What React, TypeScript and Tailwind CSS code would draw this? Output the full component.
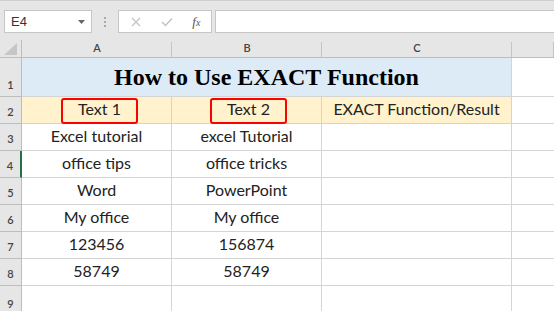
import React from "react";

const rows: [string, string][] = [
  ["Excel tutorial", "excel Tutorial"],
  ["office tips", "office tricks"],
  ["Word", "PowerPoint"],
  ["My office", "My office"],
  ["123456", "156874"],
  ["58749", "58749"],
];

const cell = "border-r border-b border-[#d4d4d4] flex items-end justify-center";
const rh = "bg-[#e6e6e6] border-r border-b border-[#bdbdbd] flex items-end justify-center pb-[3px] text-[11px] text-[#444] font-semibold";

export default function App() {
  return (
    <div className="w-[554px] h-[311px] overflow-hidden bg-white" style={{ fontFamily: "Lato, 'Open Sans', sans-serif" }}>
      {/* toolbar */}
      <div className="h-[40px] bg-[#e6e6e6] border-t border-[#cfcfcf] flex items-start pt-[9px] pl-[4px]">
        <div className="w-[88px] h-[23px] bg-white border border-[#c6c6c6] flex items-center justify-between px-[6px]">
          <span className="text-[13px] text-[#333]" style={{ fontFamily: "'Liberation Sans', sans-serif" }}>E4</span>
          <svg width="7" height="4" viewBox="0 0 7 4"><path d="M0 0 L7 0 L3.5 4 Z" fill="#666" /></svg>
        </div>
        <div className="w-[26px] h-[23px] flex flex-col items-center justify-center gap-[2px]">
          <div className="w-[2px] h-[2px] bg-[#aaa]" />
          <div className="w-[2px] h-[2px] bg-[#aaa]" />
          <div className="w-[2px] h-[2px] bg-[#aaa]" />
        </div>
        <div className="w-[94px] h-[23px] bg-white border border-[#c6c6c6] flex items-center">
          <div className="w-[34px] flex justify-center">
            <svg width="10" height="10" viewBox="0 0 10 10"><path d="M1 1 L9 9 M9 1 L1 9" stroke="#c4c4c4" strokeWidth="1.3" /></svg>
          </div>
          <div className="w-[30px] flex justify-center">
            <svg width="12" height="10" viewBox="0 0 12 10"><path d="M1 5 L4.5 8.5 L11 1.5" stroke="#c4c4c4" strokeWidth="1.5" fill="none" /></svg>
          </div>
          <div className="w-[30px] flex justify-center">
            <span className="text-[13px] italic text-[#555]" style={{ fontFamily: "'Liberation Serif', serif" }}>f<span className="text-[10px]">x</span></span>
          </div>
        </div>
        <div className="ml-[3px] flex-1 h-[23px] bg-white border border-[#c6c6c6] border-r-0" />
      </div>

      <div className="grid grid-cols-[22px_150px_150px_190px_42px] grid-rows-[18px_39px_27px_27px_27px_27px_27px_27px_27px_30px]">
        {/* header row */}
        <div className="bg-[#e6e6e6] border-r border-b border-[#bdbdbd] flex items-end justify-end pr-[4px] pb-[2px]">
          <svg width="13" height="12" viewBox="0 0 13 12"><path d="M13 0 L13 12 L0 12 Z" fill="#c6c6c6" /></svg>
        </div>
        {["A", "B", "C", ""].map((l, i) => (
          <div key={i} className="bg-[#e6e6e6] border-b border-[#bdbdbd] relative flex items-center justify-center text-[11px] font-semibold text-[#444]">
            {l}
            <div className="absolute right-0 top-[2px] bottom-0 w-px bg-[#c4c4c4]" />
          </div>
        ))}

        {/* row 1 */}
        <div className={rh}>1</div>
        <div className="col-span-3 bg-[#ddebf7] border-r border-b border-[#d4d4d4] flex items-end justify-center pb-[1px]">
          <span className="text-[24px] font-bold text-black" style={{ fontFamily: "'Liberation Serif', serif" }}>How to Use EXACT Function</span>
        </div>
        <div className="border-b border-[#d4d4d4]" />

        {/* row 2 */}
        <div className={rh}>2</div>
        <div className={`${cell} bg-[#fff2cc]`}>
          <div className="w-[77px] h-[26px] border-2 border-[#ff0000] rounded-[3px] flex items-end justify-center pb-[1px] text-[16px] text-[#222] translate-y-[1px] translate-x-[3px]">Text 1</div>
        </div>
        <div className={`${cell} bg-[#fff2cc]`}>
          <div className="w-[77px] h-[26px] border-2 border-[#ff0000] rounded-[3px] flex items-end justify-center pb-[1px] text-[16px] text-[#222] translate-y-[1px] translate-x-[2px]">Text 2</div>
        </div>
        <div className={`${cell} bg-[#fff2cc] pb-[2px] text-[16px] text-[#222]`}>EXACT Function/Result</div>
        <div className="border-b border-[#d4d4d4]" />

        {rows.map(([a, b], i) => (
          <React.Fragment key={i}>
            <div className={`${rh} ${i === 1 ? "border-r-2 border-r-[#217346]" : ""}`}>{i + 3}</div>
            <div className={`${cell} pb-[2px] text-[16px] text-[#222]`}>{a}</div>
            <div className={`${cell} pb-[2px] text-[16px] text-[#222]`}>{b}</div>
            <div className={cell} />
            <div className="border-b border-[#d4d4d4]" />
          </React.Fragment>
        ))}

        <div className={rh}>9</div>
        <div className={cell} />
        <div className={cell} />
        <div className={cell} />
        <div className="border-b border-[#d4d4d4]" />
      </div>
    </div>
  );
}
